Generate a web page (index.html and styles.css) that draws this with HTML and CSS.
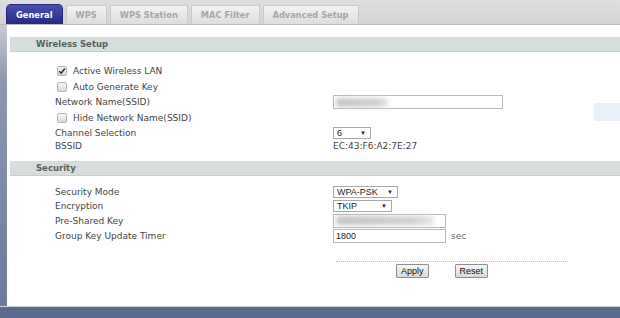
FILE: index.html
```html
<!DOCTYPE html>
<html lang="en">
<head>
    <meta charset="UTF-8">
    <title>Wireless LAN - General</title>
    <link rel="stylesheet" href="styles.css">
</head>
<body>
    <div class="page">
        <div class="tab-bar">
            <span class="tab tab-active">General</span>
            <span class="tab">WPS</span>
            <span class="tab">WPS Station</span>
            <span class="tab">MAC Filter</span>
            <span class="tab">Advanced Setup</span>
        </div>

        <div class="main">
            <div class="side-strip"></div>
            <div class="panel">
                <div class="section-title">Wireless Setup</div>
                <div class="fields fields-wireless">
                    <div class="row row-check">
                        <span class="label check-label">
                            <span class="checkbox checked">
                                <svg viewBox="0 0 10 10" width="8" height="8"><path d="M1.5 5.2 L4 7.6 L8.6 1.8" fill="none" stroke="#2b2b2b" stroke-width="1.8"/></svg>
                            </span>
                            Active Wireless LAN
                        </span>
                    </div>
                    <div class="row row-check">
                        <span class="label check-label"><span class="checkbox"></span>Auto Generate Key</span>
                    </div>
                    <div class="row row-ssid">
                        <span class="label">Network Name(SSID)</span>
                        <span class="text-input input-wide"><span class="blurred blur-ssid"></span></span>
                    </div>
                    <div class="row row-hide">
                        <span class="label check-label"><span class="checkbox"></span>Hide Network Name(SSID)</span>
                    </div>
                    <div class="row row-channel">
                        <span class="label">Channel Selection</span>
                        <span class="select select-channel">6<span class="arrow">&#9660;</span></span>
                    </div>
                    <div class="row row-bssid">
                        <span class="label">BSSID</span>
                        <span class="value">EC:43:F6:A2:7E:27</span>
                    </div>
                </div>

                <div class="section-title section-security">Security</div>
                <div class="fields fields-security">
                    <div class="row row-sec">
                        <span class="label">Security Mode</span>
                        <span class="select select-mode">WPA-PSK<span class="arrow">&#9660;</span></span>
                    </div>
                    <div class="row row-sec">
                        <span class="label">Encryption</span>
                        <span class="select select-enc">TKIP<span class="arrow">&#9660;</span></span>
                    </div>
                    <div class="row row-psk">
                        <span class="label">Pre-Shared Key</span>
                        <span class="text-input input-mid"><span class="blurred blur-psk"></span></span>
                    </div>
                    <div class="row row-timer">
                        <span class="label">Group Key Update Timer</span>
                        <span class="text-input input-mid">1800</span>
                        <span class="unit">sec</span>
                    </div>
                </div>

                <div class="actions">
                    <div class="dotted-rule"></div>
                    <div class="buttons">
                        <button class="btn">Apply</button>
                        <button class="btn">Reset</button>
                    </div>
                </div>

                <div class="side-note"></div>
            </div>
        </div>

        <div class="footer"></div>
    </div>
</body>
</html>
```

FILE: styles.css
```css
html, body {
    margin: 0;
    padding: 0;
}

body {
    background-color: #d9d9d9;
    font-family: "DejaVu Sans", Verdana, sans-serif;
    font-size: 9px;
    color: #444;
}

.page {
    display: flex;
    flex-direction: column;
    width: 620px;
    height: 318px;
    overflow: hidden;
}

/* tabs */
.tab-bar {
    display: flex;
    align-items: flex-end;
    gap: 3px;
    height: 24px;
    padding-left: 6px;
    background: linear-gradient(#dedede, #d4d4d4);
    border-bottom: 1px solid #b9b9b9;
}

.tab {
    display: flex;
    align-items: center;
    justify-content: center;
    height: 18px;
    padding: 0 9px;
    font-size: 8.3px;
    font-weight: bold;
    color: #a6a6a6;
    background: linear-gradient(#f3f3f3, #dcdcdc);
    border: 1px solid #c9c9c9;
    border-bottom: none;
    border-radius: 2px 2px 0 0;
}

.tab-active {
    height: 19px;
    color: #fff;
    background: linear-gradient(#4a4fb0, #262a86);
    border-color: #23267a;
    border-radius: 5px 5px 0 0;
}

/* body */
.main {
    display: flex;
    flex: 1;
}

.side-strip {
    width: 7px;
    background: linear-gradient(#c9ccd4, #8d97b0 20%, #6c7a9c);
}

.panel {
    position: relative;
    flex: 1;
    background-color: #fff;
    padding: 12px 0 0 3px;
}

.section-title {
    height: 14px;
    line-height: 14px;
    padding-left: 26px;
    font-size: 8.5px;
    font-weight: bold;
    color: #5a5f5e;
    background-color: #d4dfdc;
    border-bottom: 1px solid #c4cfcc;
}

.section-security {
    margin-top: 8px;
    background-color: #d8dcdb;
    border-bottom-color: #c8cccb;
}

.fields {
    padding-left: 45px;
}

.fields-wireless {
    padding-top: 11px;
}

.fields-security {
    padding-top: 9px;
}

.row {
    display: flex;
    align-items: center;
    height: 14px;
}

.row-check {
    height: 16px;
}

.row-hide {
    height: 18px;
}

.row-channel {
    height: 12px;
}

.row-psk {
    height: 15px;
}

.row-timer {
    height: 16px;
}

.label {
    width: 278px;
    flex-shrink: 0;
    white-space: nowrap;
}

.check-label {
    display: flex;
    align-items: center;
    gap: 6px;
    padding-left: 2px;
    box-sizing: border-box;
}

.checkbox {
    display: inline-flex;
    align-items: center;
    justify-content: center;
    width: 8px;
    height: 8px;
    border: 1px solid #b4b4b4;
    border-radius: 2px;
    background: linear-gradient(#f7f7f7, #d9d9d9);
}

.value {
    white-space: nowrap;
}

/* form controls */
.text-input {
    display: flex;
    align-items: center;
    box-sizing: border-box;
    height: 14px;
    padding-left: 2px;
    border: 1px solid #b8b8b8;
    background-color: #fff;
    font-family: "Liberation Sans", Arial, sans-serif;
    font-size: 9px;
    color: #222;
}

.input-wide {
    width: 170px;
}

.input-mid {
    width: 113px;
}

.blurred {
    display: block;
    height: 9px;
    border-radius: 3px;
    background: linear-gradient(90deg, #c4c4c4, #d0d0d0 80%, #e6e6e6);
    filter: blur(2px);
}

.blur-ssid {
    width: 52px;
}

.blur-psk {
    width: 98px;
}

.select {
    display: flex;
    align-items: center;
    justify-content: space-between;
    box-sizing: border-box;
    height: 12px;
    padding: 0 4px 0 3px;
    border: 1px solid #a8a8a8;
    background-color: #fff;
    font-family: "Liberation Sans", Arial, sans-serif;
    font-size: 9px;
    color: #222;
}

.select-channel {
    width: 38px;
}

.select-mode {
    width: 65px;
}

.select-enc {
    width: 59px;
}

.arrow {
    font-size: 6px;
    color: #222;
}

.unit {
    margin-left: 5px;
    color: #666;
}

/* apply / reset */
.actions {
    padding-left: 326px;
    margin-top: 17px;
}

.dotted-rule {
    width: 232px;
    border-top: 1px dotted #bcbcbc;
}

.buttons {
    display: flex;
    gap: 26px;
    padding-left: 60px;
    margin-top: 2px;
}

.btn {
    height: 14px;
    padding: 0 4px;
    border: 1px solid #8e8e8e;
    border-radius: 1px;
    background: linear-gradient(#f6f6f6, #dadada);
    font-family: "Liberation Sans", Arial, sans-serif;
    font-size: 9px;
    color: #111;
}

.side-note {
    position: absolute;
    top: 78px;
    right: 0;
    width: 26px;
    height: 18px;
    background-color: #e8eff8;
}

.footer {
    height: 11px;
    border-top: 1px solid #c7d5d9;
    background-color: #5b6a8d;
}
```
